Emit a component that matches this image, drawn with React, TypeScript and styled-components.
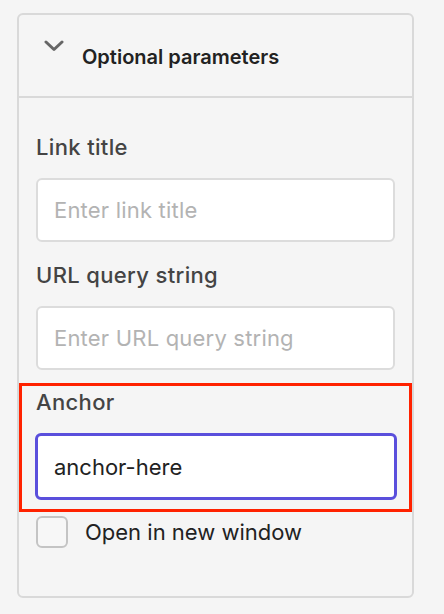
import React from 'react'
import styled, { createGlobalStyle } from 'styled-components';

const GlobalStyle = createGlobalStyle`
    html, body {
        margin: 0;
        padding: 0;
        background: #f5f5f5;
        font-family: Inter, "Noto Sans", sans-serif;
    }
`

const Panel = styled.section`
    box-sizing: border-box;
    width: 397px;
    margin: 13px 0 0 17px;
    border: 2px solid #d9d9d9;
    border-radius: 6px;
    background: #f5f5f5;
`

const Header = styled.div`
    display: flex;
    align-items: center;
    height: 81px;
    padding-left: 25px;
    border-bottom: 2px solid #d9d9d9;
`

const Chevron = styled.svg`
    width: 20px;
    height: 12px;
    margin-bottom: 20px;
    margin-right: 18px;
`

const Title = styled.h3`
    margin: 0;
    padding-top: 2px;
    font-size: 20px;
    font-weight: 600;
    color: #222;
`

const Body = styled.div`
    padding: 37px 17px 48px;
`

const Field = styled.div`
    margin-bottom: 21px;
`

const Label = styled.label`
    display: block;
    font-size: 22px;
    line-height: 24px;
    font-weight: 500;
    letter-spacing: 0.35px;
    color: #444;
    margin-bottom: 19px;
`

const Input = styled.input<{ $focused?: boolean }>`
    box-sizing: border-box;
    display: block;
    width: ${p => (p.$focused ? 'calc(100% + 3px)' : '100%')};
    height: ${p => (p.$focused ? '67px' : '64px')};
    margin: ${p => (p.$focused ? '0 -2px 0 -1px' : '0')};
    padding: 0 16px;
    border: ${p => (p.$focused ? '3px solid #5a4fdc' : '2px solid #dcdcdc')};
    border-radius: 6px;
    background: #fff;
    font-family: inherit;
    font-size: 22px;
    color: #222;
    outline: none;

    &::placeholder {
        color: #b3b3b3;
        letter-spacing: 0.2px;
    }
`

const Highlight = styled.div`
    margin: -8px -17px 0;
    padding: 4px 14px 9px;
    border: 3px solid #ff2200;
`

const CheckRow = styled.label`
    display: flex;
    align-items: center;
    gap: 17px;
    margin-top: 4px;
    font-size: 22px;
    color: #222;
`

const Box = styled.span`
    box-sizing: border-box;
    width: 32px;
    height: 32px;
    border: 2px solid #c4c4c4;
    border-radius: 6px;
    background: #f7f7f7;
`

function App() {
    return (
        <>
            <GlobalStyle />
            <Panel>
                <Header>
                    <Chevron viewBox="0 0 20 12">
                        <path d="M2 2 L10 9.5 L18 2" fill="none" stroke="#666" strokeWidth="3" strokeLinecap="round" strokeLinejoin="round" />
                    </Chevron>
                    <Title>Optional parameters</Title>
                </Header>
                <Body>
                    <Field>
                        <Label>Link title</Label>
                        <Input placeholder="Enter link title" />
                    </Field>
                    <Field>
                        <Label>URL query string</Label>
                        <Input placeholder="Enter URL query string" />
                    </Field>
                    <Highlight>
                        <Label>Anchor</Label>
                        <Input $focused defaultValue="anchor-here" />
                    </Highlight>
                    <CheckRow>
                        <Box />
                        Open in new window
                    </CheckRow>
                </Body>
            </Panel>
        </>
    )
}

export default App
